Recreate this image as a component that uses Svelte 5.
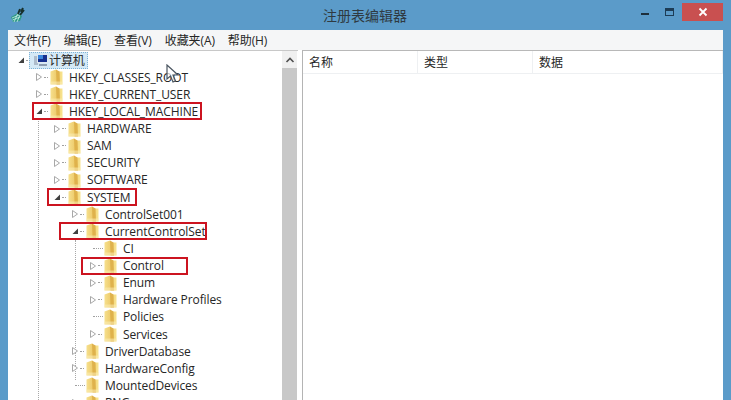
<script>
	const menus = ['文件(F)', '编辑(E)', '查看(V)', '收藏夹(A)', '帮助(H)'];
	const columns = ['名称', '类型', '数据'];

	// box: left/width of the red annotation, relative to the tree pane
	const rows = [
		{ text: 'HKEY_CLASSES_ROOT', level: 1, state: 'closed' },
		{ text: 'HKEY_CURRENT_USER', level: 1, state: 'closed' },
		{ text: 'HKEY_LOCAL_MACHINE', level: 1, state: 'open', box: [24, 166] },
		{ text: 'HARDWARE', level: 2, state: 'closed' },
		{ text: 'SAM', level: 2, state: 'closed' },
		{ text: 'SECURITY', level: 2, state: 'closed' },
		{ text: 'SOFTWARE', level: 2, state: 'closed' },
		{ text: 'SYSTEM', level: 2, state: 'open', box: [39, 86] },
		{ text: 'ControlSet001', level: 3, state: 'closed' },
		{ text: 'CurrentControlSet', level: 3, state: 'open', box: [51, 144] },
		{ text: 'CI', level: 4, state: 'leaf' },
		{ text: 'Control', level: 4, state: 'closed', box: [73, 103] },
		{ text: 'Enum', level: 4, state: 'closed' },
		{ text: 'Hardware Profiles', level: 4, state: 'closed' },
		{ text: 'Policies', level: 4, state: 'leaf' },
		{ text: 'Services', level: 4, state: 'closed' },
		{ text: 'DriverDatabase', level: 3, state: 'closed' },
		{ text: 'HardwareConfig', level: 3, state: 'closed' },
		{ text: 'MountedDevices', level: 3, state: 'leaf' },
		{ text: 'RNG', level: 3, state: 'closed' }
	];
</script>

{#snippet arrow(state)}
	<svg class="arrow" width="10" height="12" viewBox="0 0 10 12">
		{#if state === 'closed'}
			<path d="M2.5 2.5 L7.5 6 L2.5 9.5 Z" fill="#fff" stroke="#a8a8a8" />
		{:else if state === 'open'}
			<path d="M8 3.5 L8 9 L2.5 9 Z" fill="#404040" />
		{/if}
	</svg>
{/snippet}

{#snippet folder()}
	<svg class="folder" width="13" height="16" viewBox="0 0 13 16">
		<path d="M0.5 2.5 L6 0.5 L7.5 2.5 L12.5 2.5 L12.5 15.5 L0.5 15.5 Z" fill="url(#folder-fill)" />
		<path d="M6 0.5 L9.5 2.5 L10 15.5 L6.5 15.5 Z" fill="#dfb24c" />
		<path d="M0.5 12.5 L12.5 12.5 L12.5 15.5 L0.5 15.5 Z" fill="#fbeeb8" opacity="0.55" />
	</svg>
{/snippet}

<svg class="defs" width="0" height="0">
	<defs>
		<linearGradient id="folder-fill" x1="0" y1="0" x2="1" y2="0">
			<stop offset="0" stop-color="#f6e08e" />
			<stop offset="0.45" stop-color="#efce70" />
			<stop offset="1" stop-color="#f8e490" />
		</linearGradient>
	</defs>
</svg>

<div class="window">
	<header class="titlebar">
		<svg class="app-icon" width="16" height="16" viewBox="0 0 16 16">
			<path d="M1 10 L8 6 L12 9 L10 14 L3 15 Z" fill="#2f9a86" />
			<path d="M2 11 L9 8 M2.5 13 L10 10 M4 15 L8 6 M7 15 L10 8" stroke="#c9eee4" stroke-width="0.8" />
			<path d="M8 7 L10 2 M10 8 L14 3 M11 5 L13 1" stroke="#17302c" stroke-width="2" />
		</svg>
		<h1>注册表编辑器</h1>
		<div class="controls">
			<span class="min"></span>
			<span class="max"></span>
			<span class="close">
				<svg width="10" height="10" viewBox="0 0 10 10">
					<path d="M1.5 1.5 L8.5 8.5 M8.5 1.5 L1.5 8.5" stroke="#fff" stroke-width="1.8" />
				</svg>
			</span>
		</div>
	</header>

	<nav class="menubar">
		{#each menus as m}
			<span>{m}</span>
		{/each}
	</nav>

	<main class="body">
		<section class="tree">
			<div class="rows">
				<i class="vline l1"></i>
				<i class="vline l3"></i>
				<div class="row root">
					{@render arrow('open')}
					<span class="dash"></span>
					<span class="selected">
						<svg width="16" height="15" viewBox="0 0 16 15">
							<rect x="1" y="3" width="4" height="9" fill="#aebccb" />
							<rect x="4" y="1" width="11" height="9" fill="#dfe8f0" />
							<rect x="5" y="2" width="9" height="7" fill="#16308f" />
							<rect x="5" y="2" width="5" height="4" fill="#3c86dc" />
							<rect x="6" y="11" width="8" height="2" fill="#8e9db0" />
						</svg>
						<span class="label">计算机</span>
					</span>
				</div>
				{#each rows as r}
					<div class="row" style="padding-left: {8 + r.level * 18}px">
						{@render arrow(r.state)}
						<span class="dash" class:leaf={r.state === 'leaf'}></span>
						{@render folder()}
						<span class="label">{r.text}</span>
						{#if r.box}
							<span class="redbox" style="left: {r.box[0]}px; width: {r.box[1]}px"></span>
						{/if}
					</div>
				{/each}
			</div>
			<div class="scrollbar">
				<svg class="up" width="10" height="6" viewBox="0 0 10 6">
					<path d="M1.5 5 L5 1.5 L8.5 5" fill="none" stroke="#505050" stroke-width="1.6" />
				</svg>
				<div class="thumb"></div>
			</div>
		</section>

		<section class="list">
			<div class="list-head">
				{#each columns as c}
					<span>{c}</span>
				{/each}
			</div>
		</section>
	</main>

	<svg class="cursor" width="14" height="20" viewBox="0 0 14 20">
		<path d="M1 1 L1 15 L4.5 12 L7 18 L9.5 17 L7 11 L12 11 Z" fill="#fff" fill-opacity="0.7" stroke="#4a5560" stroke-width="1.2" />
	</svg>
</div>

<style>
	:global(body) {
		margin: 0;
		background: #5b9bc9;
	}

	.defs {
		position: absolute;
	}

	.window {
		position: relative;
		display: flex;
		flex-direction: column;
		width: 731px;
		height: 400px;
		overflow: hidden;
		box-sizing: border-box;
		padding: 0 8px;
		background: #5b9bc9;
		font-family: 'Open Sans', 'Noto Sans CJK SC', sans-serif;
		font-size: 12px;
		color: #262626;
	}

	.titlebar {
		position: relative;
		display: flex;
		align-items: center;
		justify-content: center;
		height: 30px;
		flex: none;
	}

	.app-icon {
		position: absolute;
		left: 2px;
		top: 7px;
	}

	h1 {
		margin: 0 0 0 -1px;
		font-size: 14px;
		font-weight: 400;
		color: #2f3a42;
	}

	.controls {
		position: absolute;
		right: 0;
		top: 3px;
		display: flex;
		align-items: flex-start;
	}

	.min {
		width: 8px;
		height: 2px;
		margin: 10px 16px 0 0;
		background: #1d2f3c;
	}

	.max {
		width: 7px;
		height: 4px;
		margin: 5px 8px 0 0;
		border: 1.5px solid #1d3c55;
		border-top-width: 3px;
	}

	.close {
		display: flex;
		align-items: center;
		justify-content: center;
		width: 41px;
		height: 18px;
		background: #c95050;
	}

	.menubar {
		display: flex;
		align-items: center;
		gap: 13px;
		height: 20px;
		flex: none;
		padding-left: 6px;
		background: #f5f6f7;
		letter-spacing: -0.1px;
	}

	.body {
		display: flex;
		flex: 1;
		min-height: 0;
		background: #fff;
	}

	.tree {
		display: flex;
		width: 290px;
		flex: none;
		border-top: 1px solid #c8c8c8;
	}

	.rows {
		position: relative;
		flex: 1;
		min-width: 0;
		padding-top: 0.5px;
	}

	.row {
		position: relative;
		display: flex;
		align-items: center;
		height: 17.13px;
		white-space: nowrap;
		letter-spacing: -0.1px;
	}

	.root {
		padding-left: 8px;
	}

	.arrow {
		flex: none;
	}

	.dash {
		flex: none;
		width: 4px;
		margin-right: 2px;
		border-top: 1px dotted #a0a0a0;
	}

	.dash.leaf {
		width: 10px;
		margin-left: -5px;
		margin-right: 1px;
	}

	.folder {
		flex: none;
		margin-right: 6px;
	}

	.selected {
		display: flex;
		align-items: center;
		height: 15px;
		margin-left: -3px;
		padding: 0 2px 0 3px;
		background: #d5e9f6;
		border: 1px dotted #7eb4d8;
	}

	.redbox {
		position: absolute;
		top: -0.5px;
		height: 14px;
		border: 2px solid #cc1420;
	}

	.vline {
		position: absolute;
		border-left: 1px dotted #a8a8a8;
	}

	.l1 {
		left: 30px;
		top: 68px;
		bottom: 0;
	}

	.l3 {
		left: 67px;
		top: 189px;
		bottom: 20px;
	}

	.scrollbar {
		display: flex;
		flex-direction: column;
		align-items: center;
		width: 15px;
		flex: none;
		margin-right: 1px;
		background: #f0f0f0;
	}

	.up {
		margin: 6px 0 5px;
	}

	.thumb {
		flex: 1;
		align-self: stretch;
		background: #c8c8c8;
	}

	.list {
		flex: 1;
		margin-left: 4px;
		border-left: 1px solid #b4b4b4;
		border-top: 1px solid #b8b8b8;
	}

	.list-head {
		display: grid;
		grid-template-columns: 115px 115px 1fr;
		height: 22px;
		border-bottom: 1px solid #eef0f2;
	}

	.list-head span {
		padding: 1px 0 0 6px;
		line-height: 21px;
		border-right: 1px solid #eef0f2;
	}

	.cursor {
		position: absolute;
		left: 166px;
		top: 64px;
	}
</style>
